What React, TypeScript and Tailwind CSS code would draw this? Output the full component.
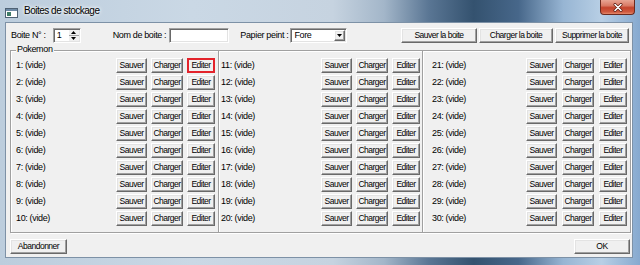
import React from "react";

const raised =
  "border border-t-white border-l-white border-b-[#696969] border-r-[#696969] shadow-[inset_-1px_-1px_0_#a0a0a0,inset_1px_1px_0_#e3e3e3] bg-[#f0f0f0]";
const sunken =
  "border border-t-[#a0a0a0] border-l-[#a0a0a0] border-b-white border-r-white shadow-[inset_1px_1px_0_#696969,inset_-1px_-1px_0_#e3e3e3] bg-white";

function Btn({ w, children, red }: { w: string; children: React.ReactNode; red?: boolean }) {
  return (
    <div
      className={`h-[15px] ${w} flex items-center justify-center leading-none text-black text-[8.5px] tracking-[-0.5px] whitespace-nowrap ${
        red ? "border-2 border-[#e3232b] bg-[#f0f0f0]" : raised
      }`}
    >
      {children}
    </div>
  );
}

function Row({ n, gap, red }: { n: number; gap: string; red?: boolean }) {
  return (
    <div className="h-[15px] flex items-center justify-between">
      <span className="leading-none">{n}: (vide)</span>
      <div className={`flex ${gap}`}>
        <Btn w="w-[31px]">Sauver</Btn>
        <Btn w="w-[32px]">Charger</Btn>
        <Btn w="w-[28px]" red={red}>
          Editer
        </Btn>
      </div>
    </div>
  );
}

function Column({ start, cls, gap }: { start: number; cls: string; gap: string }) {
  return (
    <div className={`flex flex-col gap-[2px] pt-[7px] pb-[6px] ${cls}`}>
      {Array.from({ length: 10 }, (_, i) => (
        <Row key={i} n={start + i} gap={gap} red={start + i === 1} />
      ))}
    </div>
  );
}

export default function App() {
  return (
    <div className="w-[640px] h-[265px] flex flex-col overflow-hidden font-['Liberation_Sans',Arial,sans-serif] text-[9px] tracking-[-0.35px] text-black bg-[linear-gradient(to_right,#bccddd_0%,#cad8e5_30%,#c6d3e0_52%,#a3b6c9_60%,#5a7694_67%,#34526f_74%,#47678a_81%,#97b5d3_88%,#b8cfe5_94%,#86a9cf_100%)]">
      {/* Title bar */}
      <div className="h-[22px] flex items-start shrink-0">
        <div className="mt-[8px] ml-[5px] w-[13px] h-[10px]">
          <svg width="13" height="10" viewBox="0 0 13 10">
            <rect x="0.5" y="0.5" width="12" height="9" fill="#ffffff" stroke="#4f6275" />
            <rect x="1" y="1" width="11" height="2" fill="#6d8aa6" />
            <rect x="2" y="4" width="4" height="4" fill="#3f7c68" />
          </svg>
        </div>
        <span className="mt-[6px] ml-[6px] text-[10px] tracking-[-0.5px] leading-none [text-shadow:0_0_5px_#ffffff,0_0_3px_#ffffff]">
          Boites de stockage
        </span>
        <div className="ml-auto mr-[5px] w-[35px] h-[15px] rounded-b-[4px] border border-t-0 border-[#6b2a1f] bg-[linear-gradient(to_bottom,#e8a594_0%,#d97a65_40%,#c4432c_55%,#cf5a40_85%,#e58a6c_100%)] flex items-center justify-center">
          <svg width="10" height="9" viewBox="0 0 10 9">
            <path d="M2 1.5 L8 7.5 M8 1.5 L2 7.5" stroke="#5a1a10" strokeWidth="3" strokeLinecap="round" />
            <path d="M2 1.5 L8 7.5 M8 1.5 L2 7.5" stroke="#ffffff" strokeWidth="1.6" strokeLinecap="round" />
          </svg>
        </div>
      </div>

      {/* Client area */}
      <div className="flex-1 ml-[5px] mr-[7px] mb-[7px] border border-[#7d91a6] bg-[#f0f0f0] flex flex-col">
        {/* Top row */}
        <div className="mt-[5px] h-[15px] flex items-center pl-[5px] pr-[3px]">
          <span className="leading-none">Boite N° :</span>
          <div className={`ml-[7px] w-[28px] h-[15px] flex ${sunken}`}>
            <span className="flex-1 pl-[3px] leading-[13px]">1</span>
            <div className="w-[11px] flex flex-col py-[1px] pr-[1px]">
              <div className="flex-1 flex items-center justify-center bg-[#f0f0f0]">
                <svg width="5" height="3" viewBox="0 0 5 3">
                  <path d="M0 3 L2.5 0 L5 3 Z" fill="#000" />
                </svg>
              </div>
              <div className="h-px bg-[#a0a0a0]" />
              <div className="flex-1 flex items-center justify-center bg-[#f0f0f0]">
                <svg width="5" height="3" viewBox="0 0 5 3">
                  <path d="M0 0 L2.5 3 L5 0 Z" fill="#000" />
                </svg>
              </div>
            </div>
          </div>
          <span className="ml-[32px] leading-none">Nom de boite :</span>
          <div className={`ml-[3px] w-[60px] h-[15px] ${sunken}`} />
          <span className="ml-[11px] leading-none">Papier peint :</span>
          <div className={`ml-[2px] w-[57px] h-[15px] flex ${sunken}`}>
            <span className="flex-1 pl-[3px] leading-[13px]">Fore</span>
            <div className={`w-[11px] my-[1px] mr-[1px] flex items-center justify-center ${raised}`}>
              <svg width="5" height="3" viewBox="0 0 5 3">
                <path d="M0 0 L2.5 3 L5 0 Z" fill="#000" />
              </svg>
            </div>
          </div>
          <div className="ml-auto flex gap-[2px]">
            <Btn w="w-[76px]">Sauver la boite</Btn>
            <Btn w="w-[74px]">Charger la boite</Btn>
            <Btn w="w-[74px]">Supprimer la boite</Btn>
          </div>
        </div>

        {/* Group box */}
        <div className="relative mt-[7px] ml-[4px] mr-[1px] border border-[#a0a0a0] shadow-[1px_1px_0_#ffffff,inset_1px_1px_0_#ffffff] flex">
          <span className="absolute top-[-7px] left-[5px] px-[1px] bg-[#f0f0f0] leading-[11px]">Pokemon</span>
          <Column start={1} cls="w-[207px] pl-[5px] pr-[3px]" gap="gap-[4px]" />
          <Column
            start={11}
            cls="w-[204px] pl-[2px] pr-[2px] border-l border-l-[#a0a0a0] shadow-[inset_1px_0_0_#ffffff]"
            gap="gap-[4px]"
          />
          <Column
            start={21}
            cls="flex-1 pl-[9px] pr-[3px] border-l border-l-[#a0a0a0] shadow-[inset_1px_0_0_#ffffff]"
            gap="gap-[5px]"
          />
        </div>

        {/* Bottom row */}
        <div className="mt-[6px] flex justify-between pl-[4px] pr-[2px]">
          <Btn w="w-[57px]">Abandonner</Btn>
          <Btn w="w-[56px]">OK</Btn>
        </div>
      </div>
    </div>
  );
}
